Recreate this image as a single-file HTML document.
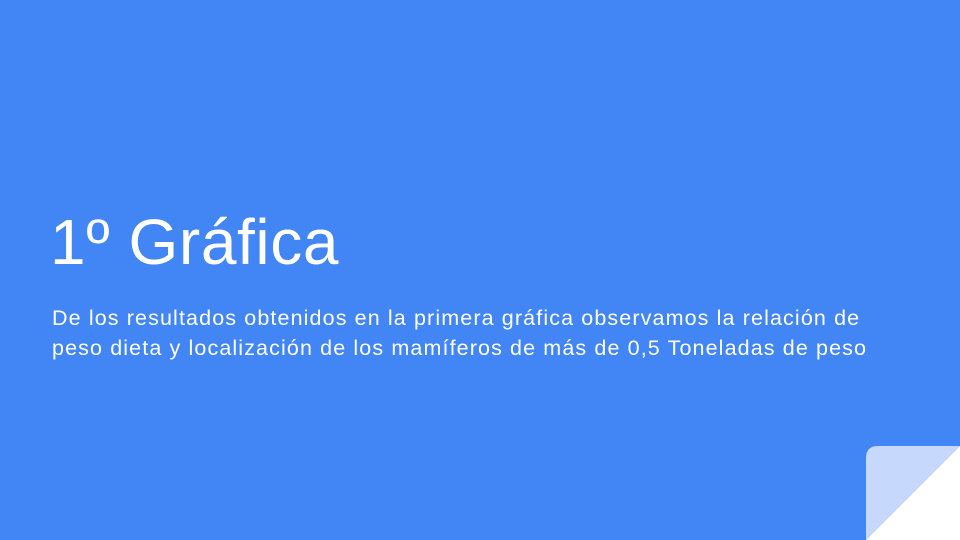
<!DOCTYPE html>
<html><head><style>
body{margin:0;width:960px;height:540px;overflow:hidden;background:#4285f4;position:relative;font-family:"Liberation Sans",sans-serif;color:#fff}
h1{position:absolute;left:50px;top:202px;margin:0;font-weight:normal;font-size:64px;line-height:80px;letter-spacing:0.6px}
p{position:absolute;left:52px;top:303px;margin:0;font-size:21.5px;line-height:30px;width:900px;letter-spacing:1.12px;white-space:nowrap}
</style></head><body>
<h1>1º Gráfica</h1>
<p>De los resultados obtenidos en la primera gráfica observamos la relación de<br>peso dieta y localización de los mamíferos de más de 0,5 Toneladas de peso</p>
<svg style="position:absolute;left:866px;top:446px" width="94" height="94">
<path d="M0 94 L0 12 Q0 0 12 0 L94 0 Z" fill="#c6d9fc"/>
<path d="M94 0 L94 94 L0 94 Z" fill="#fff"/>
</svg>
</body></html>
